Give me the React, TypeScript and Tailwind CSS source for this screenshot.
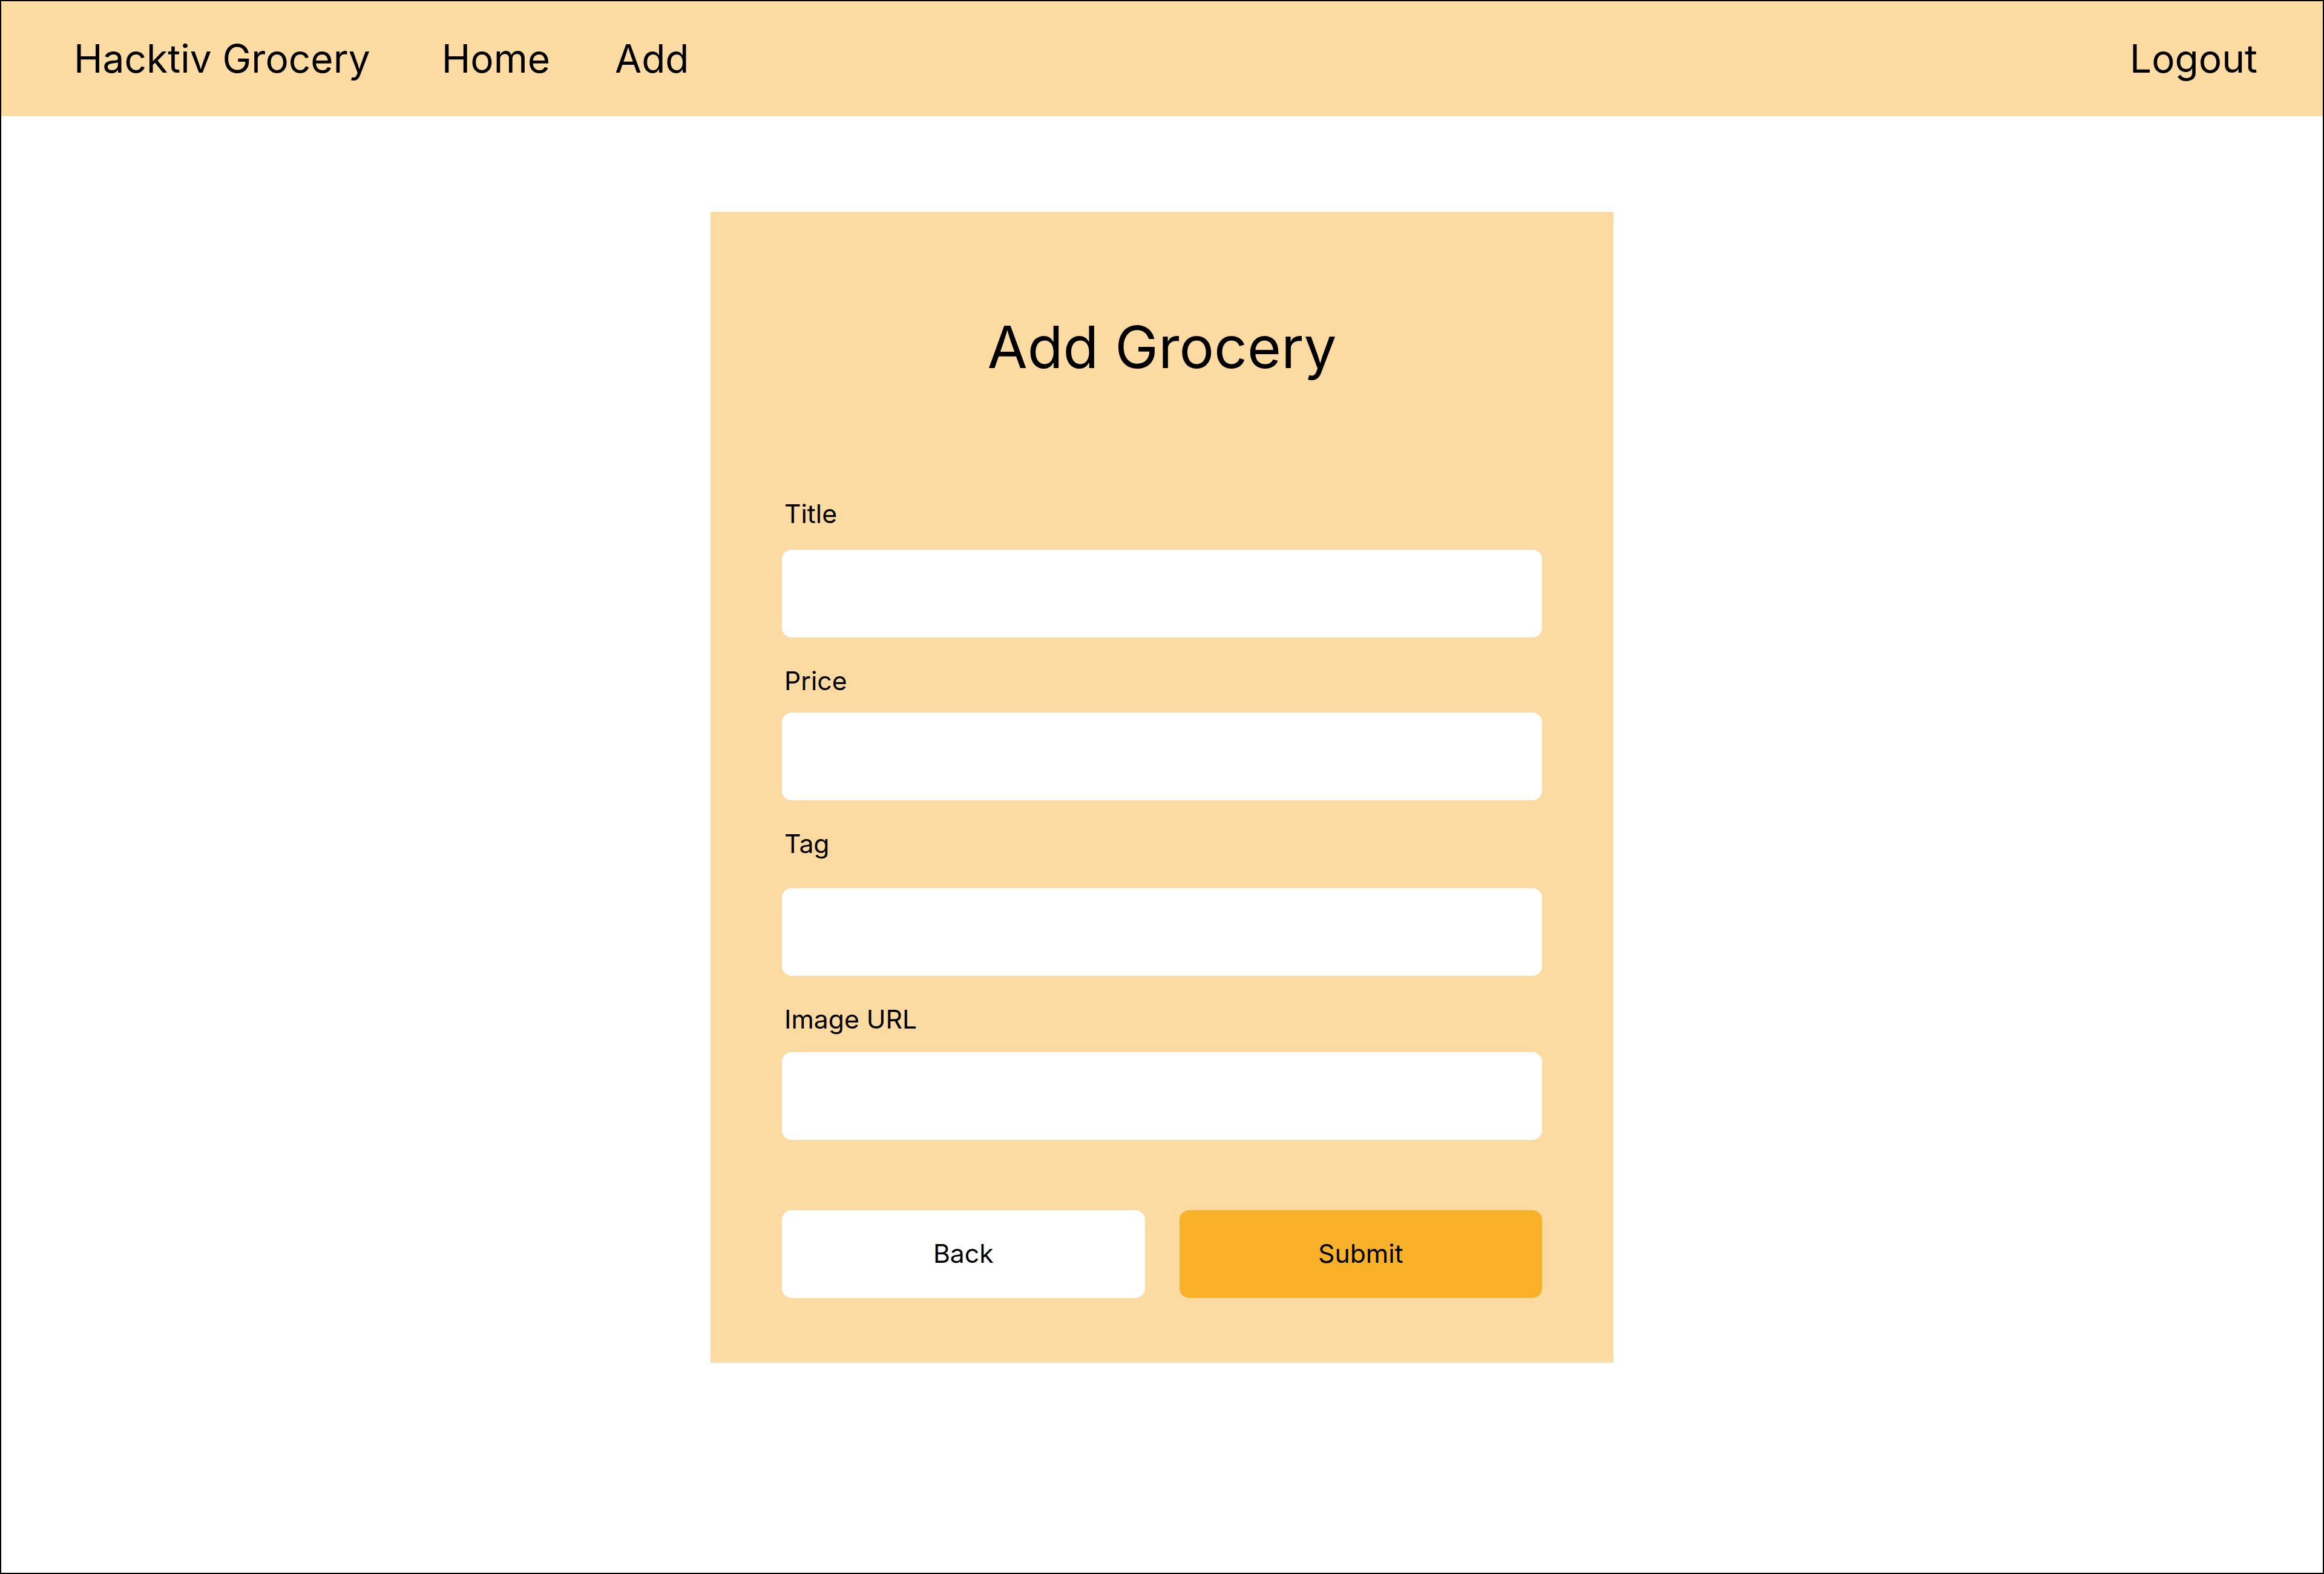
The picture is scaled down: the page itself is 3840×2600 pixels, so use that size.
// App.tsx

import React from "react";

type FieldProps = {
  label: string;
  labelMt: string;
  inputMt: string;
};

const Field: React.FC<FieldProps> = ({ label, labelMt, inputMt }) => {
  return (
    <div className="flex flex-col">
      <label className={`${labelMt} ml-[4px] text-[42.67px] leading-[42.67px] text-black`}>
        {label}
      </label>
      <input
        type="text"
        className={`${inputMt} h-[145px] w-full rounded-2xl bg-white outline-none`}
      />
    </div>
  );
};

const App: React.FC = () => {
  return (
    <div
      className="h-[2600px] w-[3840px] border-2 border-black bg-white"
      style={{ fontFamily: "Inter, 'Noto Sans', sans-serif" }}
    >
      <nav className="flex h-[190px] items-center justify-between bg-[#fcdca2] pl-[120px] pr-[108px] text-[64px] leading-[64px] text-black">
        <div className="flex items-center">
          <a className="cursor-pointer">Hacktiv Grocery</a>
          <a className="ml-[118px] cursor-pointer">Home</a>
          <a className="ml-[107px] cursor-pointer">Add</a>
        </div>
        <a className="cursor-pointer">Logout</a>
      </nav>

      <div className="flex justify-center pt-[158px]">
        <div className="flex w-[1492px] flex-col bg-[#fbdba2] px-[118px] pt-[175px] pb-[107px]">
          <h1 className="text-center text-[96px] leading-[96px] text-black">
            Add Grocery
          </h1>

          <Field label="Title" labelMt="mt-[207px]" inputMt="mt-[37px]" />
          <Field label="Price" labelMt="mt-[51px]" inputMt="mt-[31px]" />
          <Field label="Tag" labelMt="mt-[51px]" inputMt="mt-[51px]" />
          <Field label="Image URL" labelMt="mt-[51px]" inputMt="mt-[32px]" />

          <div className="mt-[116px] flex gap-[57px] text-[42.67px]">
            <button
              type="button"
              className="h-[145px] flex-1 rounded-2xl bg-white text-black"
            >
              Back
            </button>
            <button
              type="button"
              className="h-[145px] flex-1 rounded-2xl bg-[#f9b12a] text-black"
            >
              Submit
            </button>
          </div>
        </div>
      </div>
    </div>
  );
};

export default App;
